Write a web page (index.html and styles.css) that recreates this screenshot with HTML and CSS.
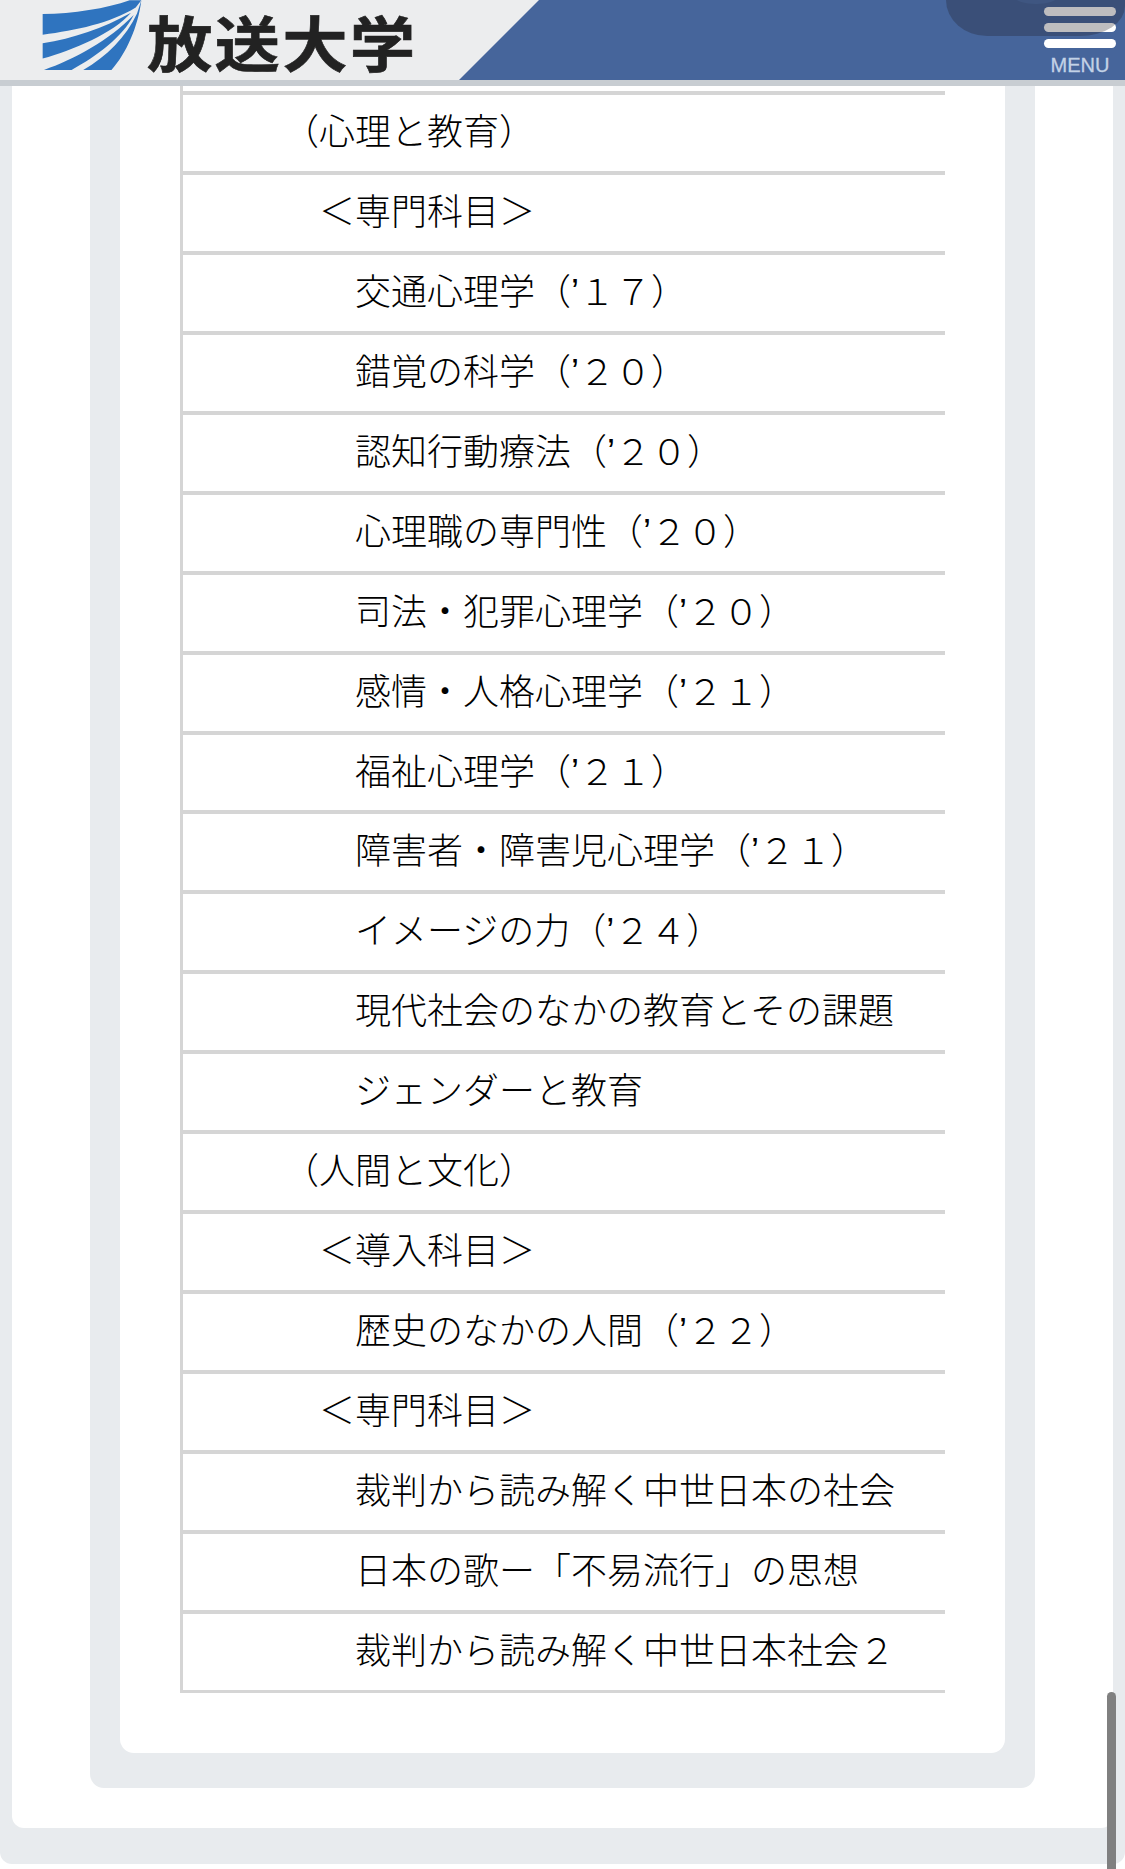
FILE: index.html
```html
<!DOCTYPE html>
<html lang="ja">
<head>
    <meta charset="UTF-8">
    <meta name="viewport" content="width=device-width, initial-scale=1.0">
    <title>放送大学</title>
    <link rel="stylesheet" href="styles.css">
</head>
<body>
    <header class="site-header">
        <a href="#" class="logo">
            <svg class="logo-mark" viewBox="36 0 310 240" width="103" height="80">
                <path d="M38,42 C130,40 230,25 300,0 L335,0 L318,22 C240,70 140,90 38,104 Z" fill="#2f74bf"/>
                <path d="M38,130 C130,115 220,85 304,38 C250,100 130,150 38,176 Z" fill="#2f74bf"/>
                <path d="M42,210 C130,180 240,120 312,45 C280,110 200,170 125,210 Z" fill="#2f74bf"/>
                <path d="M160,210 C230,170 290,110 322,40 L335,0 C325,80 290,160 245,210 Z" fill="#2f74bf"/>
            </svg>
            <span class="logo-text">放送大学</span>
        </a>
        <div class="header-band">
            <span class="header-glow"></span>
            <span class="header-shade"></span>
            <a href="#" class="menu-btn">
                <span class="menu-bar"></span>
                <span class="menu-bar"></span>
                <span class="menu-bar"></span>
                <span class="menu-label">MENU</span>
            </a>
        </div>
    </header>

    <div class="site-frame">
        <div class="site-inner">
            <div class="panel">
                <div class="panel-body">
                    <ul class="course-list">
                        <li class="group">（心理と教育）</li>
                        <li class="category">＜専門科目＞</li>
                        <li class="course">交通心理学（’１７）</li>
                        <li class="course">錯覚の科学（’２０）</li>
                        <li class="course">認知行動療法（’２０）</li>
                        <li class="course">心理職の専門性（’２０）</li>
                        <li class="course">司法・犯罪心理学（’２０）</li>
                        <li class="course">感情・人格心理学（’２１）</li>
                        <li class="course">福祉心理学（’２１）</li>
                        <li class="course">障害者・障害児心理学（’２１）</li>
                        <li class="course">イメージの力（’２４）</li>
                        <li class="course">現代社会のなかの教育とその課題</li>
                        <li class="course">ジェンダーと教育</li>
                        <li class="group">（人間と文化）</li>
                        <li class="category">＜導入科目＞</li>
                        <li class="course">歴史のなかの人間（’２２）</li>
                        <li class="category">＜専門科目＞</li>
                        <li class="course">裁判から読み解く中世日本の社会</li>
                        <li class="course">日本の歌ー「不易流行」の思想</li>
                        <li class="course">裁判から読み解く中世日本社会２</li>
                    </ul>
                </div>
            </div>
        </div>
    </div>

    <div class="scroll-thumb"></div>
</body>
</html>
```

FILE: styles.css
```css
* {
    margin: 0;
    padding: 0;
    box-sizing: border-box;
}

html, body {
    height: 1869px;
    overflow: hidden;
}

body {
    font-family: "Liberation Sans", "Noto Sans CJK JP", sans-serif;
    background-color: #fff;
    color: #000;
    position: relative;
}

a {
    text-decoration: none;
}

/* header */
.site-header {
    display: flex;
    height: 86px;
    background-color: #ecedee;
    border-bottom: 6px solid #c8cdd2;
}

.logo {
    display: flex;
    align-items: flex-start;
    padding-left: 42px;
    filter: blur(0.5px);
}

.logo-mark {
    display: block;
    flex-shrink: 0;
}

.logo-text {
    margin-left: 2px;
    margin-top: 6px;
    font-family: "Noto Sans CJK JP", sans-serif;
    font-size: 60px;
    line-height: 70px;
    letter-spacing: 2px;
    font-weight: 700;
    color: #222;
    -webkit-text-stroke: 0.6px #222;
    white-space: nowrap;
    transform: scaleX(1.09);
    transform-origin: left center;
}

.header-band {
    position: relative;
    margin-left: auto;
    width: 666px;
    display: flex;
    justify-content: flex-end;
    padding: 7px 9px 0 0;
    background-color: #46659b;
    clip-path: polygon(80px 0, 100% 0, 100% 100%, 0 100%);
}

.header-glow {
    position: absolute;
    top: -10px;
    right: 68px;
    width: 42px;
    height: 14px;
    border-radius: 50%;
    background-color: #4c6fa8;
}

.header-shade {
    position: absolute;
    top: 0;
    right: 0;
    z-index: 1;
    width: 179px;
    height: 36px;
    background-color: rgba(30, 28, 34, 0.29);
    border-radius: 0 0 45px 41px / 0 0 30px 36px;
}

.menu-btn {
    display: flex;
    flex-direction: column;
    align-items: center;
    gap: 7px;
    width: 72px;
}

.menu-bar {
    display: block;
    width: 72px;
    height: 9px;
    border-radius: 5px;
    background-color: #fff;
}

.menu-label {
    margin-top: -2px;
    font-size: 20px;
    line-height: 24px;
    color: #c3d2e6;
    -webkit-text-stroke: 0.3px #c3d2e6;
}

/* page frame */
.site-frame {
    height: 1778px;
    padding: 0 12px;
    background-color: #e8ebee;
    border-radius: 0 0 12px 12px;
}

.site-inner {
    height: 1742px;
    padding: 0 78px;
    background-color: #fff;
    border-radius: 0 0 12px 12px;
}

.panel {
    height: 1702px;
    padding: 0 30px;
    background-color: #e8ebee;
    border-radius: 0 0 14px 14px;
}

.panel-body {
    height: 1667px;
    padding: 0 60px;
    background-color: #fff;
    border-radius: 0 0 14px 14px;
}

/* course rows */
.course-list {
    list-style: none;
    padding-top: 5px;
    border-left: 3px solid #d5d5d5;
    border-bottom: 3px solid #d5d5d5;
}

.course-list li {
    height: 79.95px;
    border-top: 4px solid #d5d5d5;
    font-size: 36px;
    font-weight: 300;
    line-height: 76px;
    white-space: nowrap;
}

.group {
    padding-left: 100px;
}

.category {
    padding-left: 136px;
}

.course {
    padding-left: 172px;
}

.scroll-thumb {
    position: absolute;
    top: 1692px;
    right: 9px;
    bottom: 0;
    width: 9px;
    border-radius: 5px 5px 0 0;
    background-color: #808080;
}
```
